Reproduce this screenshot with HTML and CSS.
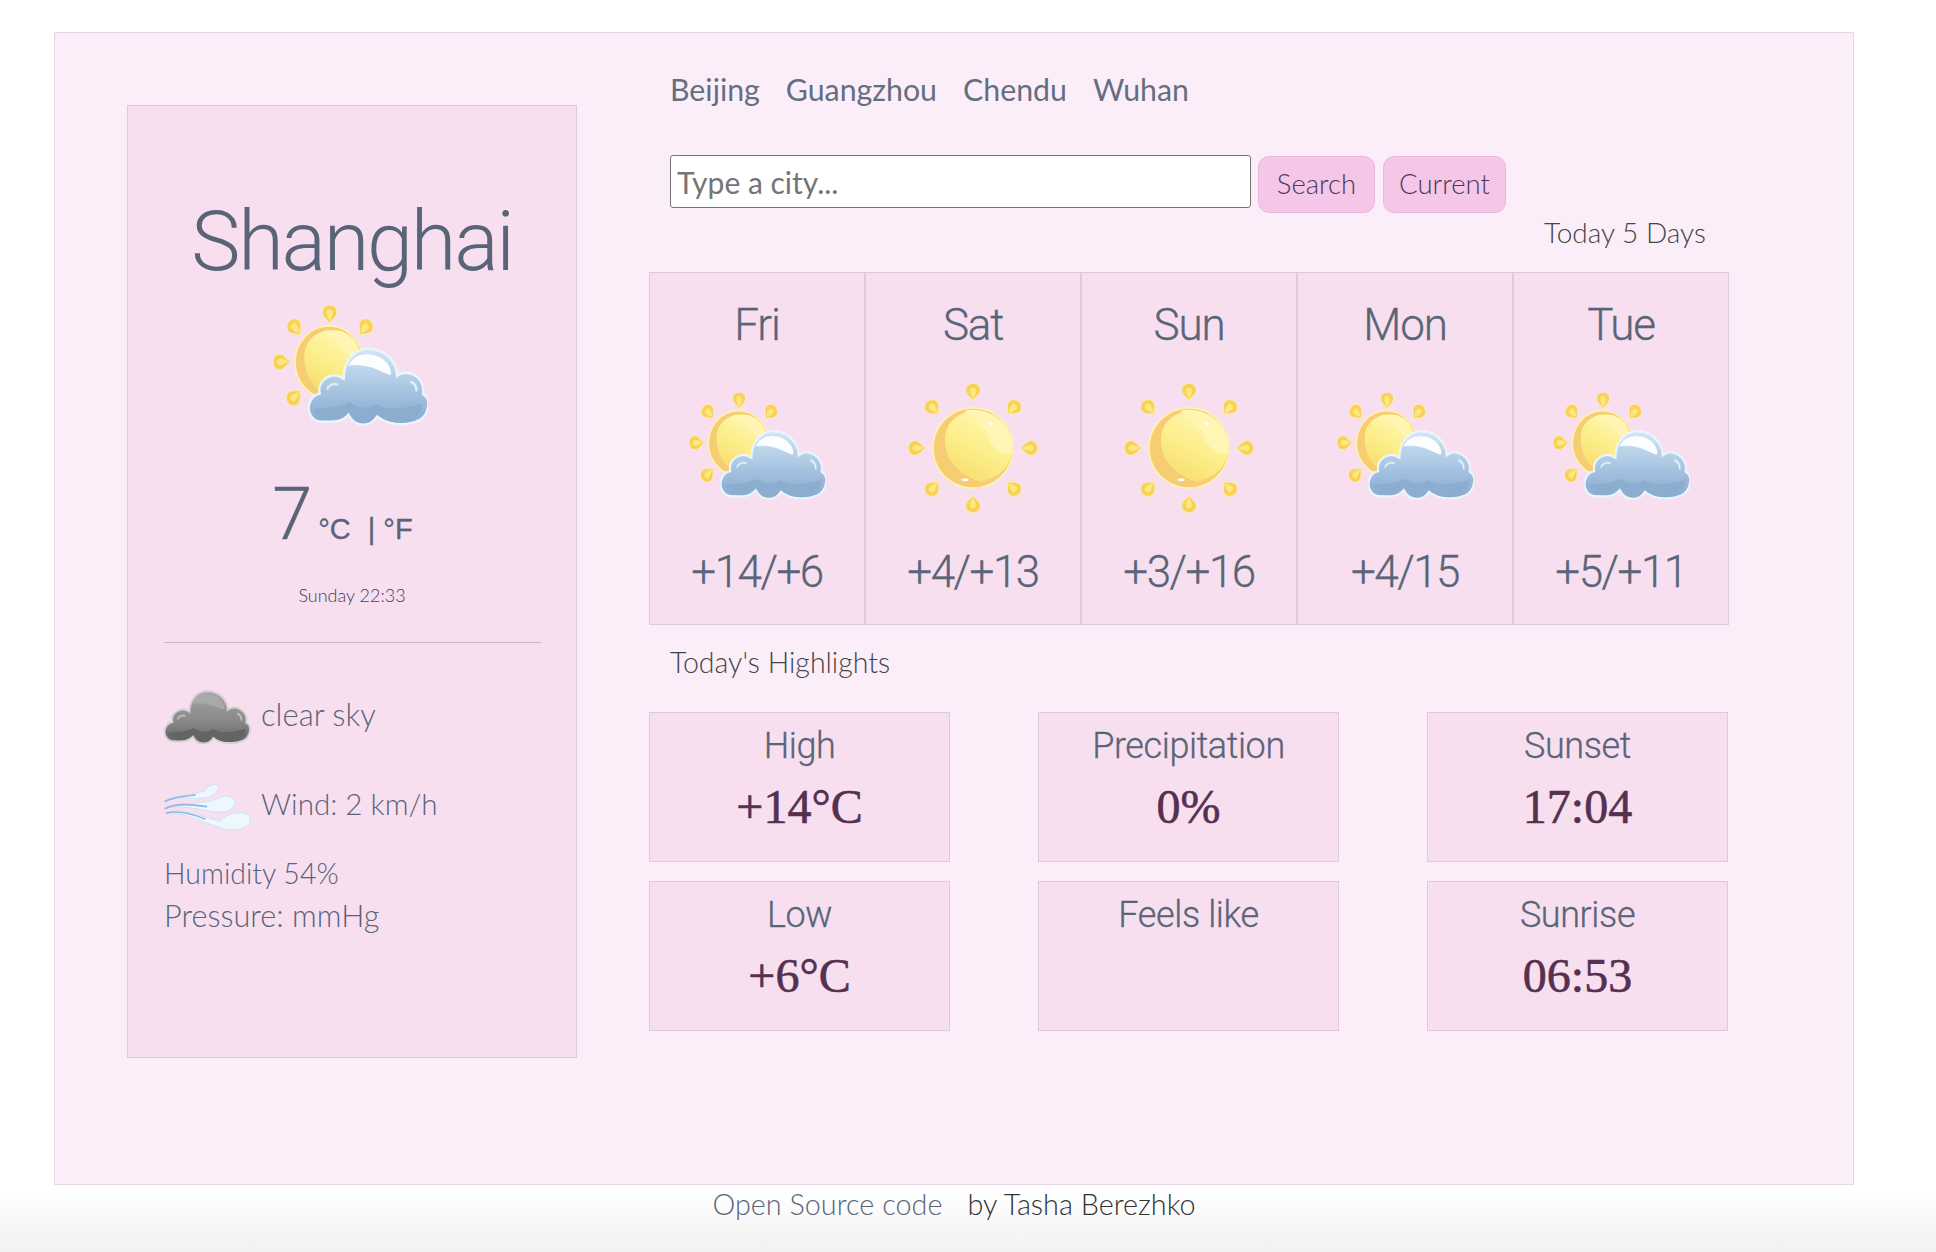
FILE: index.html
```html
<!DOCTYPE html>
<html lang="en">
<head>
<meta charset="utf-8">
<title>Weather</title>
<link rel="stylesheet" href="styles.css">
</head>
<body>
<svg class="defs" aria-hidden="true">
  <defs>
    <linearGradient id="gSun" x1="0.7" y1="0.1" x2="0.3" y2="0.9"><stop offset="0" stop-color="#fff7b0"/><stop offset="0.55" stop-color="#fcee8a"/><stop offset="1" stop-color="#f9e074"/></linearGradient>
    <linearGradient id="gCloud" x1="0" y1="0" x2="0" y2="1"><stop offset="0" stop-color="#d3e7f6"/><stop offset="0.6" stop-color="#a2c0df"/><stop offset="1" stop-color="#8aaace"/></linearGradient>
    <linearGradient id="gDark" x1="0" y1="0" x2="0" y2="1"><stop offset="0" stop-color="#a5a5a6"/><stop offset="0.6" stop-color="#878788"/><stop offset="1" stop-color="#5f6163"/></linearGradient>
    <g id="ray">
      <path d="M0 26C-5 14-22 8-22-7A22 20 0 0 1 22-7C22 8 5 14 0 26Z" fill="#f8d257" stroke="#fff3b8" stroke-width="2"/>
      <path d="M1 20C-3 10-9 6-9-5A9 9 0 0 1 9-5C9 6 4 10 1 20Z" fill="#fde97f"/>
    </g>
    <path id="cloudShape" d="M150 325C112 327 100 290 112 268C118 254 130 248 140 246C132 205 180 182 212 204C212 150 250 120 285 120C335 120 372 155 372 196C405 172 458 200 450 248C478 262 466 310 436 322C400 338 345 335 312 310C292 342 245 342 226 305C205 330 175 325 150 325Z"/>
    <symbol id="partly" viewBox="0 0 465 340" preserveAspectRatio="none">
      <use href="#ray" transform="translate(170 24)"/>
      <use href="#ray" transform="translate(67 62) rotate(-40)"/>
      <use href="#ray" transform="translate(275 62) rotate(40)"/>
      <use href="#ray" transform="translate(27 157) rotate(-90)"/>
      <use href="#ray" transform="translate(65 255) rotate(-135)"/>
      <circle cx="168" cy="158" r="102" fill="#f6cd73" stroke="#fff2b4" stroke-width="5"/>
      <path d="M95 130C105 85 140 68 180 68C240 66 275 120 262 190L150 245C110 220 88 175 95 130Z" fill="url(#gSun)"/>
      <path d="M150 70C200 62 250 100 262 170C235 150 210 110 190 95C175 85 160 78 150 70Z" fill="#fff6b6"/>
      <use href="#cloudShape" fill="url(#gCloud)" stroke="#eaf6fb" stroke-width="7"/>
      <path d="M226 168C238 142 264 134 290 136C326 138 358 165 354 194C326 190 290 158 226 168Z" fill="#fbfdff"/>
      <path d="M118 292C145 282 190 292 230 270C250 288 290 292 310 274C340 296 400 288 446 274C452 300 430 315 400 325C370 332 335 325 312 305C290 333 250 330 228 298C205 325 150 330 118 292Z" fill="#8cacd0"/>
      <path d="M162 235C168 222 180 215 195 222" fill="none" stroke="#dbeaf6" stroke-width="7"/>
      <path d="M412 212C425 215 432 228 430 240" fill="none" stroke="#e4f0f9" stroke-width="7"/>
    </symbol>
    <symbol id="sunny" viewBox="0 0 392 392">
      <use href="#ray" transform="translate(196 28)"/>
      <use href="#ray" transform="translate(76 76) rotate(-45)"/>
      <use href="#ray" transform="translate(316 76) rotate(45)"/>
      <use href="#ray" transform="translate(28 196) rotate(-90)"/>
      <use href="#ray" transform="translate(364 196) rotate(90)"/>
      <use href="#ray" transform="translate(76 316) rotate(-135)"/>
      <use href="#ray" transform="translate(316 316) rotate(135)"/>
      <use href="#ray" transform="translate(196 364) rotate(180)"/>
      <circle cx="196" cy="196" r="121" fill="#f6cd73" stroke="#fff2b4" stroke-width="5"/>
      <path d="M112 170C112 115 160 84 205 84C265 84 316 135 314 200C310 255 275 285 220 298C150 275 110 230 112 170Z" fill="url(#gSun)"/>
      <path d="M170 84C240 65 325 130 314 210C290 218 260 205 245 170C232 130 200 100 170 84Z" fill="#fff6b6"/>
      <ellipse cx="250" cy="122" rx="7" ry="4" fill="#fff" transform="rotate(45 250 122)"/>
      <ellipse cx="172" cy="292" rx="11" ry="4" fill="#fff"/>
    </symbol>
    <symbol id="cloudDark" viewBox="105 115 365 225" preserveAspectRatio="none">
      <use href="#cloudShape" fill="url(#gDark)" stroke="#cfd2cf" stroke-width="8"/>
      <path d="M225 172C235 140 262 128 290 130C332 132 362 165 358 195C330 192 290 160 225 172Z" fill="#a9a9aa"/>
      <path d="M118 292C145 282 190 292 230 270C250 288 290 292 310 274C340 296 400 288 446 274C452 300 430 315 400 325C370 332 335 325 312 305C290 333 250 330 228 298C205 325 150 330 118 292Z" fill="#626466"/>
      <path d="M412 212C425 215 432 228 430 240" fill="none" stroke="#c2c2c3" stroke-width="8"/>
      <path d="M162 235C168 222 180 215 195 222" fill="none" stroke="#bdbdbe" stroke-width="8"/>
    </symbol>
    <symbol id="wind" viewBox="0 0 262 146" preserveAspectRatio="none">
      <path d="M2 56C40 32 90 36 122 24C134 6 160-2 164 12C166 28 142 46 115 46C80 49 40 38 2 56Z" fill="#edf8fe" stroke="#cfe2f5" stroke-width="3"/>
      <path d="M2 78C50 52 110 72 165 46C190 30 216 46 214 62C211 86 170 93 140 86C90 78 50 65 2 78Z" fill="#edf8fe" stroke="#cfe2f5" stroke-width="3"/>
      <path d="M6 92C50 72 100 100 170 116C190 86 260 80 260 110C260 140 210 146 180 139C130 126 60 86 6 92Z" fill="#edf8fe" stroke="#cfe2f5" stroke-width="3"/>
      <path d="M2 56C30 42 60 40 95 36M2 78C40 60 80 65 130 72M6 92C40 82 80 92 125 110" fill="none" stroke="#8fb6e4" stroke-width="5"/>
    </symbol>
  </defs>
</svg>

<main class="card">
  <aside class="current">
    <h1 class="city">Shanghai</h1>
    <svg class="icon-main"><use href="#partly"/></svg>
    <div class="temp"><span class="temp-num">7</span><span class="temp-unit">°C</span><span class="temp-unit temp-alt">| °F</span></div>
    <p class="stamp">Sunday 22:33</p>
    <hr class="rule">
    <div class="stat stat-sky"><svg class="icon-stat"><use href="#cloudDark"/></svg><span>clear sky</span></div>
    <div class="stat stat-wind"><svg class="icon-stat icon-wind"><use href="#wind"/></svg><span>Wind: 2 km/h</span></div>
    <p class="line line-first">Humidity 54%</p>
    <p class="line line-last">Pressure: mmHg</p>
  </aside>

  <section class="content">
    <nav class="cities"><a>Beijing</a><a>Guangzhou</a><a>Chendu</a><a>Wuhan</a></nav>
    <form class="search">
      <input class="search-input" type="text" placeholder="Type a city...">
      <button class="btn btn-search" type="button">Search</button>
      <button class="btn btn-current" type="button">Current</button>
    </form>
    <div class="range">Today 5 Days</div>
    <div class="forecast">
      <div class="day"><div class="day-name">Fri</div><svg class="day-icon"><use href="#partly"/></svg><div class="day-temp">+14/+6</div></div>
      <div class="day"><div class="day-name">Sat</div><svg class="day-icon day-sun"><use href="#sunny"/></svg><div class="day-temp">+4/+13</div></div>
      <div class="day"><div class="day-name">Sun</div><svg class="day-icon day-sun"><use href="#sunny"/></svg><div class="day-temp">+3/+16</div></div>
      <div class="day"><div class="day-name">Mon</div><svg class="day-icon"><use href="#partly"/></svg><div class="day-temp">+4/15</div></div>
      <div class="day"><div class="day-name">Tue</div><svg class="day-icon"><use href="#partly"/></svg><div class="day-temp">+5/+11</div></div>
    </div>
    <h2 class="highlights-title">Today's Highlights</h2>
    <div class="highlights">
      <div class="tile"><div class="tile-label">High</div><div class="tile-value">+14°C</div></div>
      <div class="tile"><div class="tile-label">Precipitation</div><div class="tile-value">0%</div></div>
      <div class="tile"><div class="tile-label">Sunset</div><div class="tile-value">17:04</div></div>
      <div class="tile"><div class="tile-label">Low</div><div class="tile-value">+6°C</div></div>
      <div class="tile"><div class="tile-label">Feels like</div><div class="tile-value"></div></div>
      <div class="tile"><div class="tile-label">Sunrise</div><div class="tile-value">06:53</div></div>
    </div>
  </section>
</main>
<footer class="foot"><a class="foot-link">Open Source code</a><span class="foot-by">by Tasha Berezhko</span></footer>
</body>
</html>
```
FILE: styles.css
```css
* { box-sizing: border-box; }
html, body { height: 100%; }
body {
  margin: 0;
  height: 1252px;
  overflow: hidden;
  padding: 32px 0 0 54px;
  font-family: "Lato", "Liberation Sans", sans-serif;
  color: #5a6478;
  background: linear-gradient(to bottom, #fff 0, #fff 1195px, #f1f1f1 1252px);
}
.defs { display: block; width: 0; height: 0; }
.card {
  display: flex;
  gap: 72px;
  width: 1800px;
  height: 1153px;
  padding: 72px 0 0 72px;
  background: #fceef9;
  border: 1px solid #e6d6e6;
}
.current {
  width: 450px;
  height: 953px;
  flex: none;
  padding: 0 36px;
  background: #f7dff0;
  border: 1px solid #e0c9de;
  display: flex;
  flex-direction: column;
}
.city {
  margin: 86px 0 0;
  font: 300 83px/100px "Roboto", sans-serif;
  letter-spacing: -2.3px;
  text-align: center;
}
.icon-main { display: block; width: 155px; height: 121px; margin: 14px 0 0 109px; }
.temp {
  margin-top: 56px;
  display: flex;
  align-items: baseline;
  justify-content: center;
  height: 64px;
  line-height: 64px;
  padding-right: 19px;
}
.temp-num { font: 300 72px/64px "Roboto", sans-serif; -webkit-text-stroke: .4px #5a6478; }
.temp-unit { font: 400 29px/64px "Liberation Sans", sans-serif; margin-left: 6px; -webkit-text-stroke: .3px #5a6478; }
.temp-alt { margin-left: 17px; }
.stamp { margin: 36px 0 0; font-size: 18px; line-height: 24px; font-weight: 300; text-align: center; color: #45404f; }
.rule { width: 377px; margin: 35px 0 0; border: 0; border-top: 1px solid #cdb3cf; }
.stat { display: flex; align-items: center; font-weight: 300; }
.stat span { padding-bottom: 7px; }
.stat-sky { margin-top: 47px; height: 55px; font-size: 31px; }
.stat-wind { margin-top: 38px; height: 48px; font-size: 29.6px; }
.icon-stat { width: 87px; height: 55px; margin-right: 10px; flex: none; }
.icon-wind { height: 48px; }
.line { margin: 0; line-height: 43px; font-weight: 300; }
.line-first { margin-top: 21px; font-size: 28.5px; }
.line-last { font-size: 30.7px; margin-top: -1px; }

.content { width: 1080px; flex: none; margin-top: -72px; display: flex; flex-direction: column; }
.cities { display: flex; gap: 26px; margin: 36px 0 0 21px; font-size: 30.3px; line-height: 40px; color: #646e82; }
.search { display: flex; gap: 7px; align-items: flex-start; margin: 46px 0 0 21px; height: 58px; }
.search-input {
  width: 581px;
  height: 53px;
  padding: 0 6px;
  background: #fff;
  border: 1px solid #767676;
  border-radius: 3px;
  font: 400 30px "Lato", sans-serif;
}
.search-input::placeholder { color: #757575; }
.btn {
  margin-top: 1px;
  height: 57px;
  padding: 0 0 2px;
  border: 1px solid #e6b9dc;
  border-radius: 11px;
  background: #f5c6e8;
  color: #4a3a52;
  font: 300 27.5px "Lato", sans-serif;
}
.btn-search { width: 117px; }
.btn-current { width: 123px; margin-left: 1px; }
.range { margin: 1px 0 0 895px; font-size: 28px; line-height: 36px; font-weight: 300; color: #444; white-space: nowrap; }
.forecast { display: grid; grid-template-columns: repeat(5, 216px); margin-top: 22px; height: 353px; }
.day {
  height: 353px;
  background: #f7dff0;
  border: 1px solid #e0c9de;
  display: flex;
  flex-direction: column;
  align-items: center;
}
.day-name { margin-top: 22px; height: 60px; font: 300 44px/60px "Roboto", sans-serif; letter-spacing: -1.2px; -webkit-text-stroke: .3px #5a6478; }
.day-icon { display: block; width: 137px; height: 108px; margin-top: 38px; }
.day-sun { width: 130px; height: 130px; margin-top: 28px; }
.day-temp { font: 300 44px/56px "Roboto", sans-serif; letter-spacing: -1.5px; -webkit-text-stroke: .3px #5a6478; margin-top: 31px; }
.day-icon:not(.day-sun) + .day-temp { margin-top: 43px; }
.highlights-title { margin: 18px 0 0 21px; font-size: 28.5px; line-height: 38px; font-weight: 300; color: #444; }
.highlights { display: grid; grid-template-columns: repeat(3, 301px); column-gap: 88px; row-gap: 19px; margin-top: 31px; }
.tile { height: 150px; background: #f7dff0; border: 1px solid #e0c9de; text-align: center; }
.tile-label { margin-top: 11px; font: 300 36px/44px "Roboto", sans-serif; letter-spacing: -.4px; -webkit-text-stroke: .3px #5a6478; }
.tile-value { margin-top: 9px; height: 60px; font: 400 48px/60px "Liberation Serif", serif; color: #55304f; -webkit-text-stroke: .6px #55304f; }
.foot { width: 1800px; display: flex; justify-content: center; gap: 25px; font-size: 28.8px; line-height: 38px; font-weight: 300; }
.foot-link { color: #5a6478; }
.foot-by { color: #333; }
```
